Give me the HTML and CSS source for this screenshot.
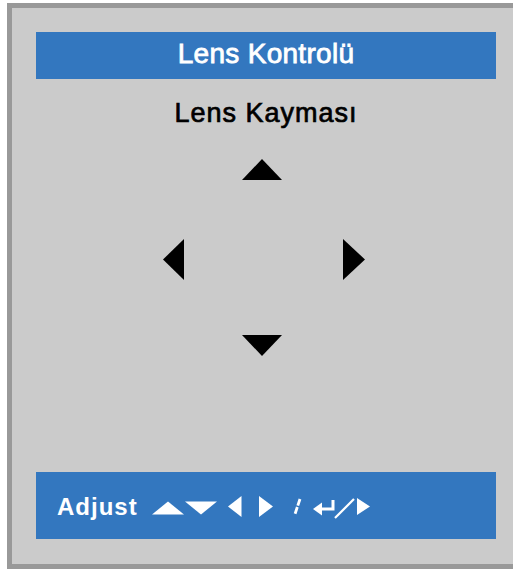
FILE: index.html
```html
<!doctype html>
<html>

<head>
  <meta charset="UTF-8">
  <title>Lens Kontrolü</title>
  <link rel="stylesheet" href="styles.css">
</head>

<body>
  <div class="frame">
    <div class="title-bar">Lens Kontrolü</div>

    <div class="subtitle">Lens Kayması</div>

    <div class="pad">
      <svg class="tri-v" width="40" height="21" viewBox="0 0 40 21">
        <polygon points="0,21 40,21 20,0" />
      </svg>
      <div class="pad-row">
        <svg width="21" height="41" viewBox="0 0 21 41">
          <polygon points="21,0 21,41 0,20.5" />
        </svg>
        <svg width="22" height="41" viewBox="0 0 22 41">
          <polygon points="0,0 0,41 22,20.5" />
        </svg>
      </div>
      <svg class="tri-v tri-down" width="40" height="21" viewBox="0 0 40 21">
        <polygon points="0,0 40,0 20,21" />
      </svg>
    </div>

    <div class="help-bar">
      <span class="help-label">Adjust</span>
      <svg class="help-keys" width="218" height="24" viewBox="0 0 218 24">
        <polygon points="0,19.5 32,19.5 16,6.5" />
        <polygon points="33,6.5 65,6.5 49,19.5" />
        <polygon points="89.5,1 89.5,22 76,11.5" />
        <polygon points="107,1 107,22 121,11.5" />
        <line x1="148" y1="4" x2="143" y2="19" stroke="#fff" stroke-width="2.8" stroke-dasharray="7 1.5" />
        <polygon points="161,14 170,7.5 170,20.5" />
        <path d="M169 14 H181 V5" fill="none" stroke="#fff" stroke-width="3" />
        <line x1="183" y1="23" x2="202" y2="4" stroke="#fff" stroke-width="2.2" />
        <polygon points="205,3 205,20 218,11.5" />
      </svg>
    </div>
  </div>
</body>

</html>
```

FILE: styles.css
```css
body {
  margin: 0;
  background: #fff;
  font-family: "Liberation Sans", Arial, sans-serif;
}

.frame {
  margin: 3px 0 0 7px;
  box-sizing: border-box;
  width: 506px;
  height: 566px;
  border: 5px solid #999;
  border-right: none;
  background: #cbcbcb;
  padding: 24px 17px 25px 24px;
  display: flex;
  flex-direction: column;
}

.title-bar {
  height: 47px;
  box-sizing: border-box;
  padding-bottom: 4px;
  background: #3377bf;
  color: #fff;
  font-size: 28px;
  letter-spacing: 0.3px;
  -webkit-text-stroke: 0.8px #fff;
  display: flex;
  align-items: center;
  justify-content: center;
}

.subtitle {
  margin-top: 19px;
  font-size: 27px;
  line-height: 30px;
  letter-spacing: 1px;
  -webkit-text-stroke: 0.7px #000;
  text-align: center;
  color: #000;
}

.pad {
  align-self: center;
  margin-right: 4px;
  width: 202px;
  display: flex;
  flex-direction: column;
  align-items: center;
}

.pad svg {
  display: block;
  fill: #000;
}

.tri-v {
  margin-top: 31px;
  margin-right: 4px;
}

.tri-down {
  margin-top: 55px;
}

.pad-row {
  margin-top: 59px;
  width: 100%;
  display: flex;
  justify-content: space-between;
}

.help-bar {
  margin-top: auto;
  height: 67px;
  box-sizing: border-box;
  padding: 2px 0 0 21px;
  background: #3377bf;
  color: #fff;
  display: flex;
  align-items: center;
}

.help-label {
  font-size: 24px;
  font-weight: bold;
  letter-spacing: 1px;
}

.help-keys {
  display: block;
  margin-left: 14px;
  fill: #fff;
}
```
